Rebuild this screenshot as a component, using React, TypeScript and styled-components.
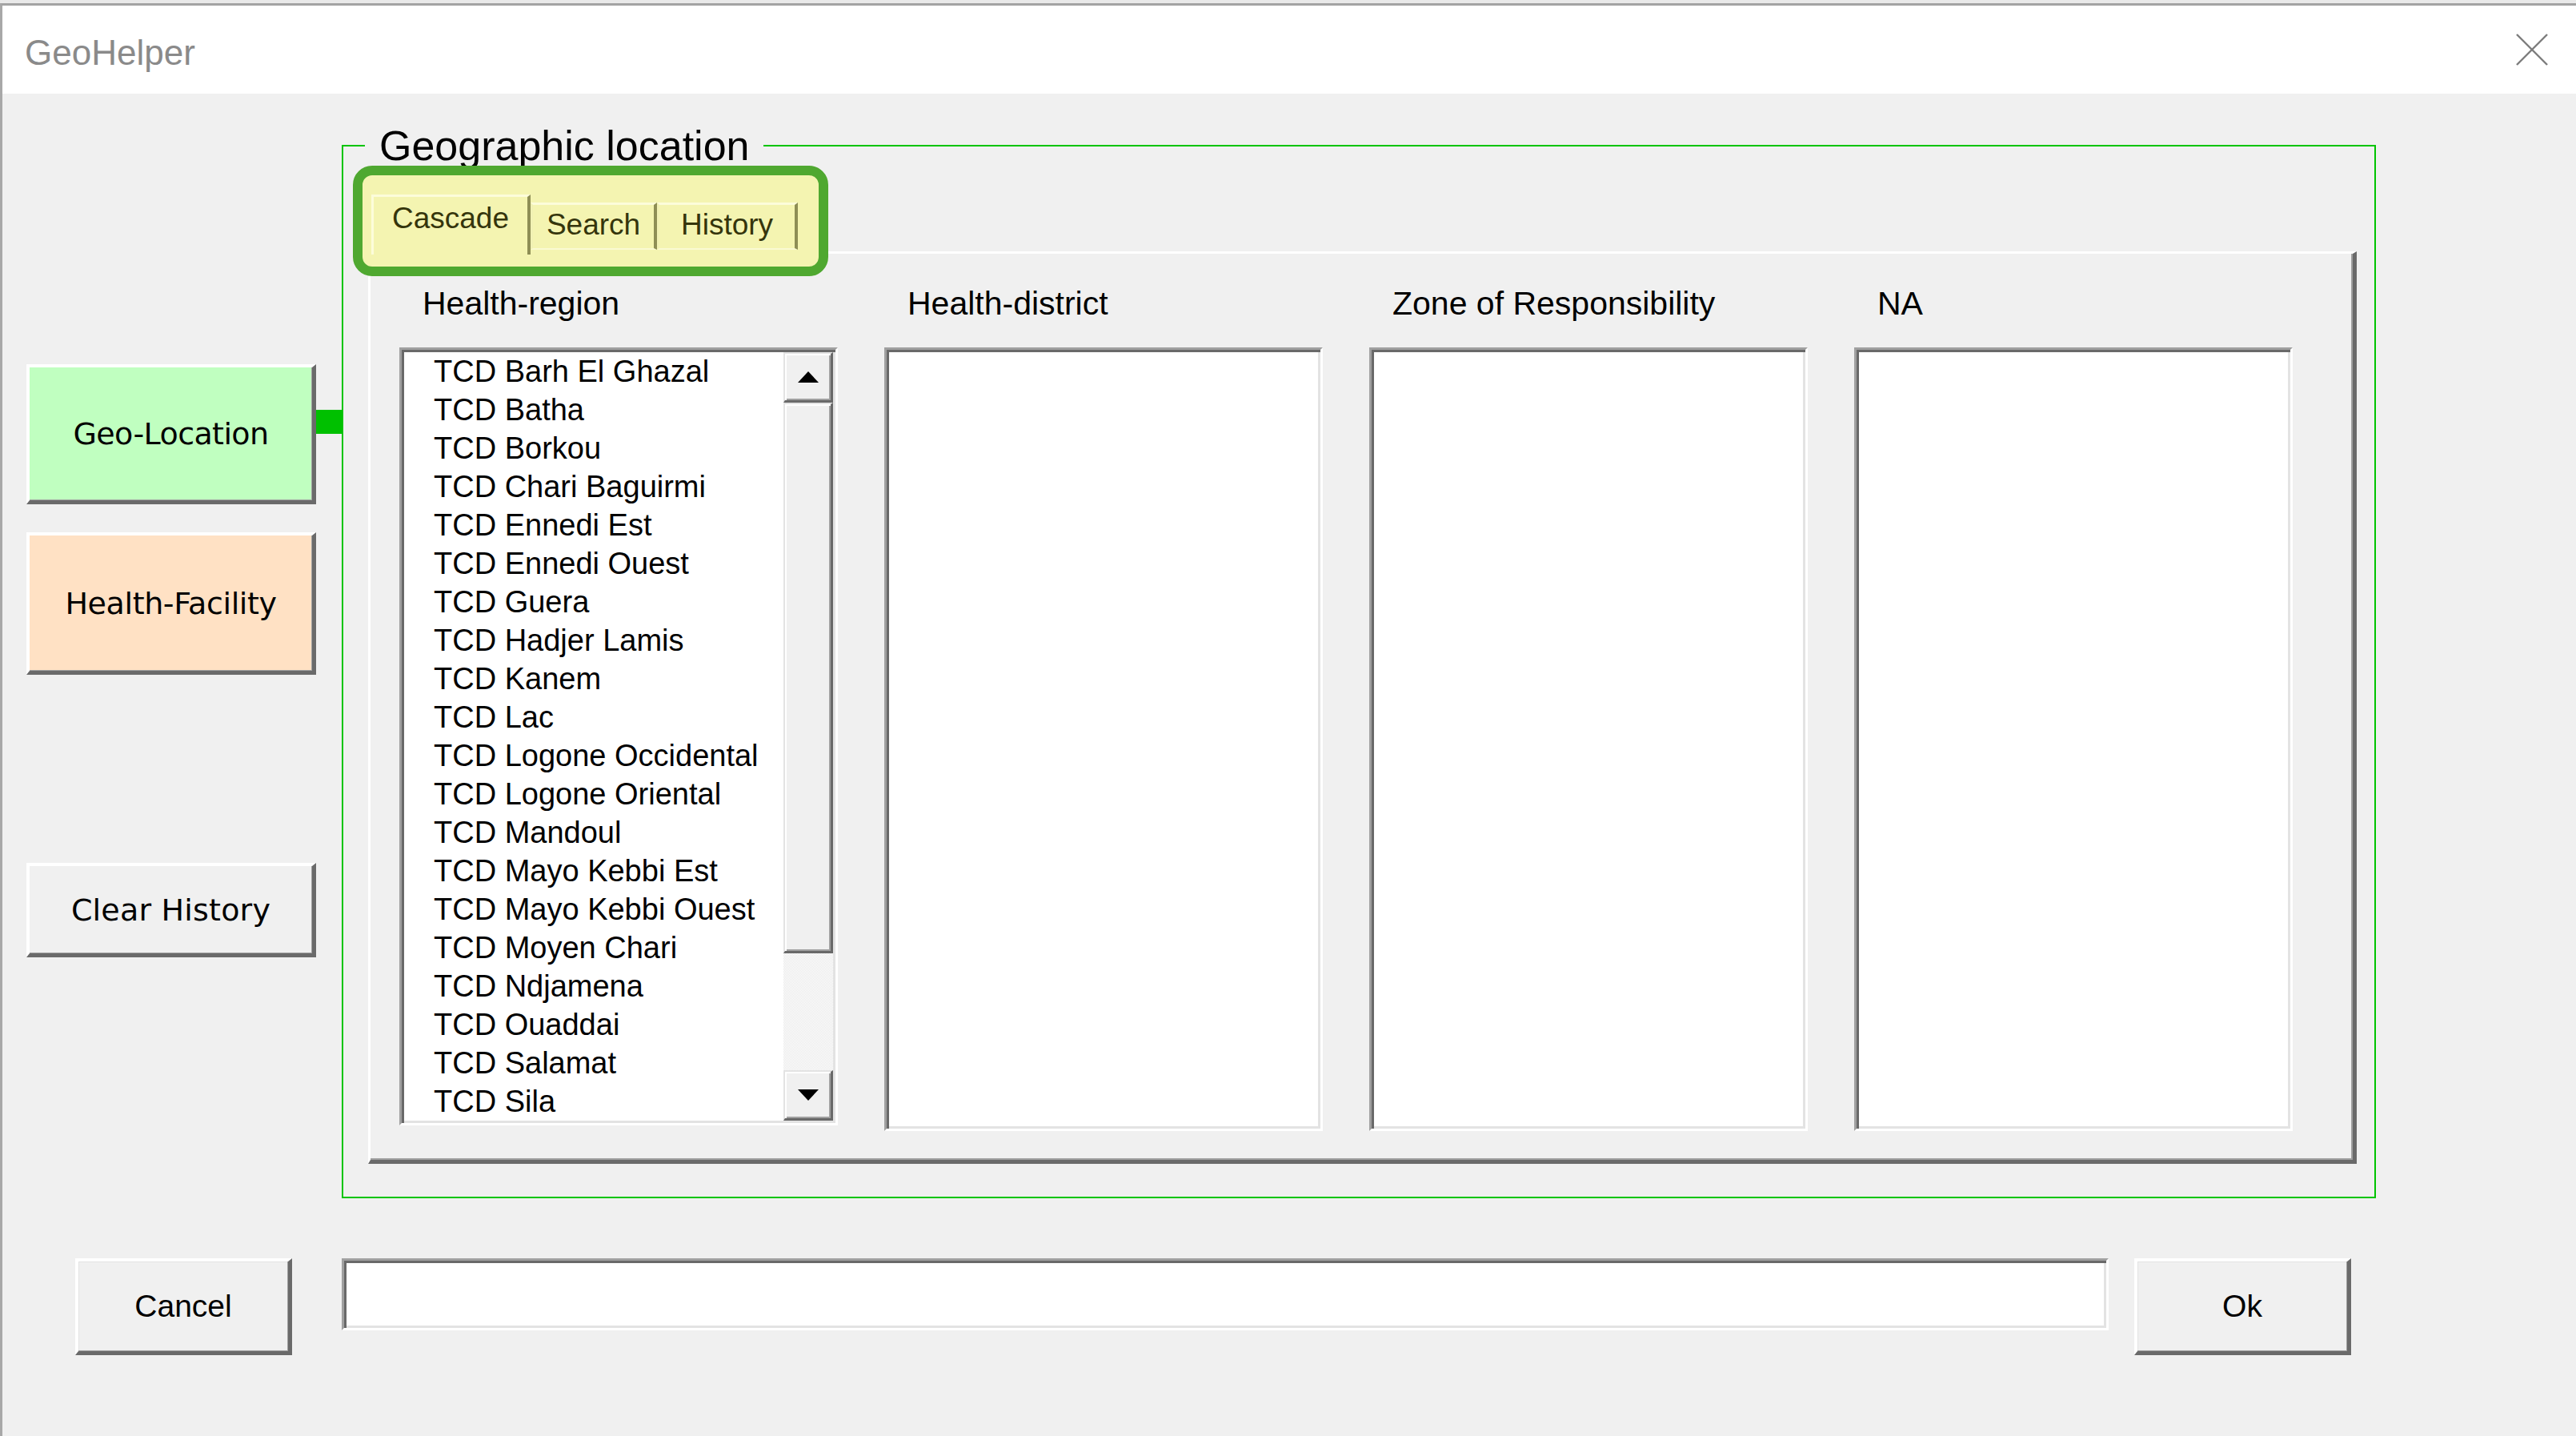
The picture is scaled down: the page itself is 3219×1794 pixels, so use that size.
import React from "react";
import styled, { createGlobalStyle } from "styled-components";

const GlobalStyle = createGlobalStyle`
  html, body { margin: 0; padding: 0; background: #e9e9e9; }
  body {
    width: 3219px;
    height: 1794px;
    overflow: hidden;
    font-family: "Liberation Sans", Arial, sans-serif;
    color: #000;
  }
  *, *::before, *::after { box-sizing: border-box; }
`;

const Screen = styled.div`
  width: 3219px;
  height: 1794px;
  padding-top: 4px;
  background: #e9e9e9;
`;

const Window = styled.div`
  height: 1790px;
  border-top: 3px solid #a3a3a3;
  border-left: 3px solid #a8a8a8;
  background: #f0f0f0;
  display: flex;
  flex-direction: column;
`;

const TitleBar = styled.div`
  height: 110px;
  background: #ffffff;
  display: flex;
  align-items: center;
  justify-content: space-between;
  padding: 0 35px 0 28px;
`;

const TitleText = styled.div`
  font-family: "Liberation Sans", Arial, sans-serif;
  font-size: 44px;
  color: #8a8a8a;
  line-height: 1;
  padding-top: 8px;
`;

const CloseIcon = styled.svg`
  width: 40px;
  height: 40px;
  display: block;
`;

const MainRow = styled.div`
  display: flex;
  align-items: flex-start;
  margin-top: 37px;
  padding-left: 30px;
`;

const LeftColumn = styled.div`
  width: 362px;
  display: flex;
  flex-direction: column;
  padding-top: 301px;
`;

const SideButton = styled.div<{ $bg: string; $h: number; $mt: number; $ls: number }>`
  height: ${(p) => p.$h}px;
  margin-top: ${(p) => p.$mt}px;
  background: ${(p) => p.$bg};
  border-style: solid;
  border-width: 4px 5px 5px 4px;
  border-color: #ffffff #6a6a6a #6a6a6a #ffffff;
  box-shadow: inset -1px -1px 0 #a0a0a0;
  display: flex;
  align-items: center;
  justify-content: center;
  font-family: "DejaVu Sans", Verdana, sans-serif;
  font-size: 38px;
  letter-spacing: ${(p) => p.$ls}px;
  color: #000;
`;

const Connector = styled.div`
  width: 32px;
  height: 30px;
  margin-top: 358px;
  background: #00c000;
`;

const Frame = styled.fieldset`
  width: 2542px;
  height: 1343px;
  margin: 0;
  min-width: 0;
  border: 2px solid #00c400;
  padding: 0 22px 0 12px;
`;

const FrameLegend = styled.legend`
  font-family: "Liberation Sans", Arial, sans-serif;
  font-size: 52px;
  line-height: 56px;
  padding: 0 17px 0 18px;
  margin-left: 15px;
  color: #000;
`;

const MultiPage = styled.div`
  display: flex;
  flex-direction: column;
  align-items: flex-start;
`;

const TabHighlight = styled.div`
  position: relative;
  z-index: 2;
  margin-top: -3px;
  width: 594px;
  height: 138px;
  border: 12px solid #4fa830;
  border-radius: 24px;
  background: #f4f4b1;
  display: flex;
  align-items: flex-end;
  padding: 0 0 15px 11px;
`;

const Tab = styled.div<{ $active?: boolean; $w: number }>`
  width: ${(p) => p.$w}px;
  height: ${(p) => (p.$active ? 75 : 59)}px;
  margin-bottom: ${(p) => (p.$active ? 0 : 6)}px;
  border-top: 3px solid #fcfcda;
  border-left: 3px solid ${(p) => (p.$active ? "#fcfcda" : "#f1f1b3")};
  border-right: 4px solid #8e8e55;
  border-bottom: ${(p) => (p.$active ? "0" : "2px solid #fafad2")};
  display: flex;
  justify-content: center;
  align-items: flex-start;
  padding-top: ${(p) => (p.$active ? 7 : 5)}px;
  font-family: "Liberation Sans", Arial, sans-serif;
  font-size: 37px;
  line-height: 40px;
  color: #35350c;
`;

const Page = styled.div`
  position: relative;
  z-index: 1;
  margin-left: 19px;
  margin-top: -31px;
  width: 2485px;
  height: 1140px;
  border-top: 3px solid #ffffff;
  border-left: 3px solid #ffffff;
  border-right: 5px solid #6a6a6a;
  border-bottom: 5px solid #6a6a6a;
  box-shadow: inset -2px -2px 0 #a0a0a0;
  padding: 38px 0 0 36px;
  display: grid;
  grid-template-columns: repeat(4, 548px);
  column-gap: 58px;
  align-content: start;
  align-items: start;
`;

const Column = styled.div`
  display: flex;
  flex-direction: column;
`;

const Heading = styled.div`
  height: 48px;
  line-height: 48px;
  padding-left: 29px;
  font-family: "Liberation Sans", Arial, sans-serif;
  font-size: 41px;
  color: #000;
  white-space: nowrap;
`;

const ListBox = styled.div<{ $h: number }>`
  margin-top: 31px;
  height: ${(p) => p.$h}px;
  background: #ffffff;
  border-style: solid;
  border-width: 3px;
  border-color: #a0a0a0 #ffffff #ffffff #a0a0a0;
  box-shadow: inset 3px 3px 0 #696969, inset -3px -3px 0 #e3e3e3;
  padding: 3px;
  display: flex;
  overflow: hidden;
`;

const Items = styled.div`
  flex: 1;
  padding-left: 37px;
  overflow: hidden;
`;

const Item = styled.div`
  height: 48px;
  line-height: 48px;
  font-family: "Liberation Sans", Arial, sans-serif;
  font-size: 38px;
  color: #000;
  white-space: nowrap;
`;

const ScrollBar = styled.div`
  width: 62px;
  display: flex;
  flex-direction: column;
`;

const ScrollButton = styled.div<{ $h: number }>`
  height: ${(p) => p.$h}px;
  flex: none;
  background: #f0f0f0;
  border-style: solid;
  border-width: 2px 3px 3px 2px;
  border-color: #e3e3e3 #696969 #696969 #e3e3e3;
  box-shadow: inset 2px 2px 0 #ffffff, inset -2px -2px 0 #a0a0a0;
  display: flex;
  align-items: center;
  justify-content: center;
`;

const Track = styled.div`
  flex: 1;
  background-color: #f4f4f4;
  background-image: repeating-conic-gradient(#ffffff 0 25%, #e8e8e8 0 50%);
  background-size: 2px 2px;
`;

const Arrow = styled.svg`
  width: 26px;
  height: 14px;
  display: block;
`;

const BottomRow = styled.div`
  display: flex;
  align-items: flex-start;
  margin-top: 75px;
  padding-left: 91px;
`;

const PushButton = styled.div<{ $ml: number }>`
  width: 271px;
  height: 121px;
  margin-left: ${(p) => p.$ml}px;
  background: #f0f0f0;
  border-style: solid;
  border-width: 4px 5px 5px 4px;
  border-color: #ffffff #6a6a6a #6a6a6a #ffffff;
  box-shadow: inset -1px -1px 0 #a0a0a0, inset 1px 1px 0 #e3e3e3;
  display: flex;
  align-items: center;
  justify-content: center;
  font-family: "Liberation Sans", Arial, sans-serif;
  font-size: 39px;
  color: #000;
`;

const TextBox = styled.div`
  width: 2208px;
  height: 90px;
  margin-left: 62px;
  background: #ffffff;
  border-style: solid;
  border-width: 3px;
  border-color: #a0a0a0 #ffffff #ffffff #a0a0a0;
  box-shadow: inset 3px 3px 0 #696969, inset -3px -3px 0 #e3e3e3;
`;

const regions = [
  "TCD Barh El Ghazal",
  "TCD Batha",
  "TCD Borkou",
  "TCD Chari Baguirmi",
  "TCD Ennedi Est",
  "TCD Ennedi Ouest",
  "TCD Guera",
  "TCD Hadjer Lamis",
  "TCD Kanem",
  "TCD Lac",
  "TCD Logone Occidental",
  "TCD Logone Oriental",
  "TCD Mandoul",
  "TCD Mayo Kebbi Est",
  "TCD Mayo Kebbi Ouest",
  "TCD Moyen Chari",
  "TCD Ndjamena",
  "TCD Ouaddai",
  "TCD Salamat",
  "TCD Sila",
];

const columns = [
  { title: "Health-region", items: regions, h: 972 },
  { title: "Health-district", items: [] as string[], h: 979 },
  { title: "Zone of Responsibility", items: [] as string[], h: 979 },
  { title: "NA", items: [] as string[], h: 979 },
];

const UpArrow = () => (
  <Arrow viewBox="0 0 26 14">
    <polygon points="13,0 26,14 0,14" fill="#000" />
  </Arrow>
);

const DownArrow = () => (
  <Arrow viewBox="0 0 26 14">
    <polygon points="0,0 26,0 13,14" fill="#000" />
  </Arrow>
);

export default function App() {
  return (
    <>
      <GlobalStyle />
      <Screen>
        <Window>
          <TitleBar>
            <TitleText>GeoHelper</TitleText>
            <CloseIcon viewBox="0 0 40 40">
              <line x1="1" y1="1" x2="39" y2="39" stroke="#7c7c7c" strokeWidth="2.4" />
              <line x1="39" y1="1" x2="1" y2="39" stroke="#7c7c7c" strokeWidth="2.4" />
            </CloseIcon>
          </TitleBar>

          <MainRow>
            <LeftColumn>
              <SideButton $bg="#c0ffc0" $h={175} $mt={0} $ls={-0.6}>
                Geo-Location
              </SideButton>
              <SideButton $bg="#ffe1c4" $h={178} $mt={35} $ls={-0.4}>
                Health-Facility
              </SideButton>
              <SideButton $bg="#f0f0f0" $h={118} $mt={235} $ls={0.2}>
                Clear History
              </SideButton>
            </LeftColumn>
            <Connector />
            <Frame>
              <FrameLegend>Geographic location</FrameLegend>
              <MultiPage>
                <TabHighlight>
                  <Tab $active $w={199}>Cascade</Tab>
                  <Tab $w={158}>Search</Tab>
                  <Tab $w={176}>History</Tab>
                </TabHighlight>
                <Page>
                  {columns.map((c) => (
                    <Column key={c.title}>
                      <Heading>{c.title}</Heading>
                      <ListBox $h={c.h}>
                        <Items>
                          {c.items.map((it) => (
                            <Item key={it}>{it}</Item>
                          ))}
                        </Items>
                        {c.items.length > 0 && (
                          <ScrollBar>
                            <ScrollButton $h={63}>
                              <UpArrow />
                            </ScrollButton>
                            <ScrollButton $h={688} />
                            <Track />
                            <ScrollButton $h={63}>
                              <DownArrow />
                            </ScrollButton>
                          </ScrollBar>
                        )}
                      </ListBox>
                    </Column>
                  ))}
                </Page>
              </MultiPage>
            </Frame>
          </MainRow>

          <BottomRow>
            <PushButton $ml={0}>Cancel</PushButton>
            <TextBox />
            <PushButton $ml={32}>Ok</PushButton>
          </BottomRow>
        </Window>
      </Screen>
    </>
  );
}
